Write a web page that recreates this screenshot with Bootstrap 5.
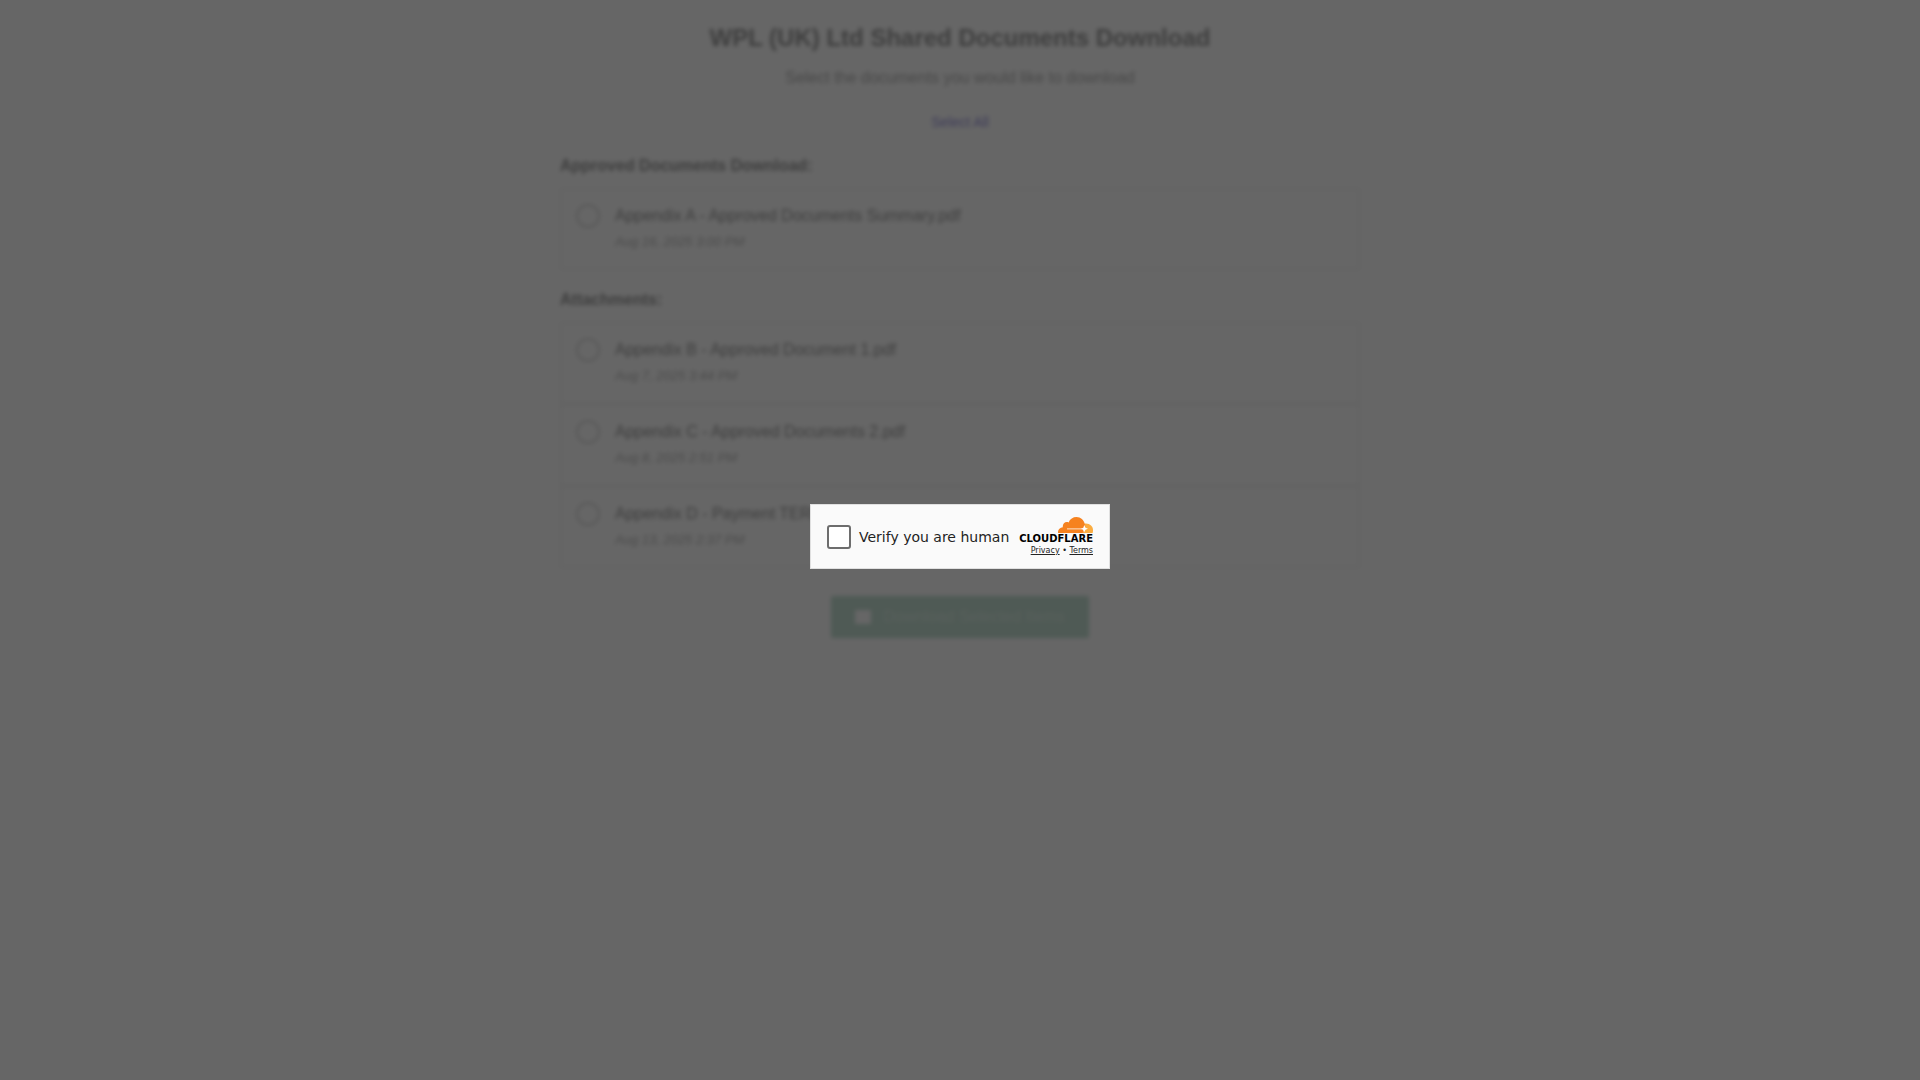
<!DOCTYPE html>
<html lang="en">
<head>
<meta charset="utf-8">
<meta name="viewport" content="width=device-width, initial-scale=1">
<title>WPL (UK) Ltd Shared Documents Download</title>
<link href="https://cdn.jsdelivr.net/npm/bootstrap@5.3.0/dist/css/bootstrap.min.css" rel="stylesheet">
<style>
  body { font-family: "Liberation Sans", Arial, sans-serif; font-size: 16px; line-height: 24px; color: #333; background: #fff; }
  .doc-page { max-width: 800px; padding-top: 22px; opacity: .5; }
  .doc-title { margin-bottom: 12px; font-size: 24px; line-height: 32px; font-weight: 700; }
  .doc-intro { margin-bottom: 22px; color: #666; }
  .select-all { font-size: 14px; line-height: 20px; color: #2a1fb8; }
  .doc-heading { margin-bottom: 12px; font-size: 16px; line-height: 20px; font-weight: 700; }
  .doc-group { margin-bottom: 20px; }
  .doc-item { min-height: 82px; padding: 14px; gap: 15px; border: 2px solid #eee; }
  .doc-check { appearance: none; width: 24px; height: 24px; margin: 0; border: 2px solid #bbb; border-radius: 50%; background: #fff; }
  .doc-date { font-size: 13px; line-height: 20px; font-style: italic; color: #777; }
  .btn-download { min-height: 42px; margin-top: 8px; padding: 8px 24px; gap: 12px; font-size: 16px; line-height: 24px; color: #fff; background: #198754; border: 0; border-radius: 2px; }
  .btn-download:disabled { color: #fff; background: #198754; opacity: .5; }
  .btn-text { opacity: .4; }
  .verify-overlay { background: rgba(0, 0, 0, .6); backdrop-filter: blur(2px); padding-bottom: 7px; z-index: 10; }
  .verify-box { width: 300px; height: 65px; padding: 0 16px; border: 1px solid #e0e0e0; background: #fafafa; color: #232323; font-family: "DejaVu Sans", Verdana, sans-serif; }
  .verify-check { appearance: none; width: 24px; height: 24px; margin: 0; border: 2px solid #6d6d6d; border-radius: 3px; background: #fff; }
  .verify-label { font-size: 14px; line-height: 20px; }
  .brand-word { font-size: 10px; line-height: 12px; font-weight: 700; color: #000; }
  .brand-links { font-size: 8px; line-height: 12px; }
  .brand-links a { color: #232323; }
</style>
</head>
<body>
<main class="doc-page container-fluid px-0 d-flex flex-column">
  <h1 class="doc-title text-center">WPL (UK) Ltd Shared Documents Download</h1>
  <p class="doc-intro text-center">Select the documents you would like to download</p>
  <a class="select-all align-self-center text-decoration-none mb-4" href="#">Select All</a>
  <h2 class="doc-heading">Approved Documents Download:</h2>
  <div class="doc-group">
    <div class="doc-item d-flex">
      <input class="doc-check flex-shrink-0" type="checkbox" id="docA">
      <label for="docA"><span class="d-block">Appendix A - Approved Documents Summary.pdf</span><span class="doc-date d-block mt-1">Aug 16, 2025 3:00 PM</span></label>
    </div>
  </div>
  <h2 class="doc-heading">Attachments:</h2>
  <div class="doc-group">
    <div class="doc-item d-flex">
      <input class="doc-check flex-shrink-0" type="checkbox" id="docB">
      <label for="docB"><span class="d-block">Appendix B - Approved Document 1.pdf</span><span class="doc-date d-block mt-1">Aug 7, 2025 3:44 PM</span></label>
    </div>
    <div class="doc-item d-flex">
      <input class="doc-check flex-shrink-0" type="checkbox" id="docC">
      <label for="docC"><span class="d-block">Appendix C - Approved Documents 2.pdf</span><span class="doc-date d-block mt-1">Aug 8, 2025 2:51 PM</span></label>
    </div>
    <div class="doc-item d-flex">
      <input class="doc-check flex-shrink-0" type="checkbox" id="docD">
      <label for="docD"><span class="d-block">Appendix D - Payment TERMS.pdf</span><span class="doc-date d-block mt-1">Aug 13, 2025 2:37 PM</span></label>
    </div>
  </div>
  <button class="btn-download btn align-self-center d-inline-flex align-items-center" type="button" disabled>
    <svg width="16" height="16" viewBox="0 0 16 16" fill="currentColor" aria-hidden="true"><path d="M0 1h16v14H0z"/></svg>
    <span class="btn-text">Download Selected Items</span>
  </button>
</main>

<div class="verify-overlay position-fixed top-0 start-0 w-100 h-100 d-flex align-items-center justify-content-center">
  <div class="verify-box d-flex align-items-center justify-content-between">
    <div class="d-flex align-items-center gap-2">
      <input class="verify-check" type="checkbox" id="human">
      <label class="verify-label text-nowrap" for="human">Verify you are human</label>
    </div>
    <div class="d-flex flex-column align-items-end">
      <svg width="35" height="16" viewBox="0 0 35 16" role="img" aria-label="Cloudflare">
        <path fill="#fbad41" d="M26.500 6.500C31.500 5.800 35 9 35 13C35 14.500 34.800 16 34.500 16H24z"/>
        <path fill="#f6821f" d="M0 16C-.3 12.800 1.600 10.600 4.800 10.200C4.400 6.500 7.300 4.200 10.600 5.400C12 2 15 0 18.500 0C22.800 0 25.800 3 26.800 7C27.500 10 27.300 12 26.200 14C25.600 15.300 25 16 24 16z"/>
        <path fill="#fff" d="M9 11.200H24.500V12.500H9z" opacity=".6"/>
        <path fill="#fff" d="M26.300 8L27.500 10.800L30 11.800L27.500 12.800L26 15.500L25 12.800L23 11.800L25.300 10.800z"/>
      </svg>
      <span class="brand-word">CLOUDFLARE</span>
      <span class="brand-links"><a href="#">Privacy</a> • <a href="#">Terms</a></span>
    </div>
  </div>
</div>
<script src="https://cdn.jsdelivr.net/npm/bootstrap@5.3.0/dist/js/bootstrap.bundle.min.js"></script>
</body>
</html>
